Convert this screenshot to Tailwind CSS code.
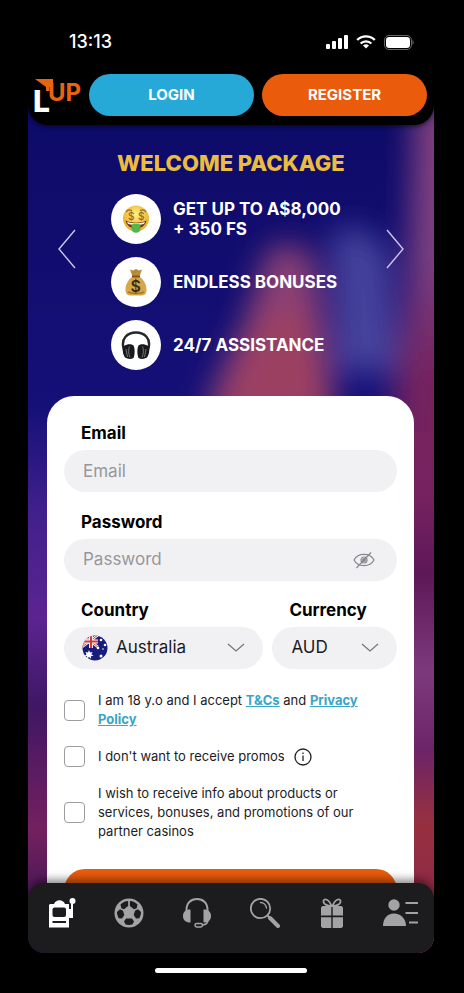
<!DOCTYPE html>
<html lang="en">
<head>
    <meta charset="UTF-8">
    <meta name="viewport" content="width=device-width, initial-scale=1.0">
    <script src="https://cdn.jsdelivr.net/npm/@tailwindcss/browser@4"></script>
    <title>Level Up - Register</title>
</head>
<body class="flex h-screen flex-col overflow-hidden bg-black pl-7 pr-[30px] font-['Inter',sans-serif] text-black">

    <!-- Status bar -->
    <div class="flex h-[72px] shrink-0 items-center justify-between pb-0 pl-[41px] pr-5 pt-3 text-white">
        <span class="text-lg/6 font-medium">13:13</span>
        <div class="flex items-center gap-2">
            <svg class="h-[14px] w-[22px]" viewBox="0 0 22 14" fill="currentColor">
                <rect x="0" y="9" width="4" height="5" rx="1"/>
                <rect x="6" y="6" width="4" height="8" rx="1"/>
                <rect x="12" y="3" width="4" height="11" rx="1"/>
                <rect x="18" y="0" width="4" height="14" rx="1"/>
            </svg>
            <svg class="h-[14px] w-5" viewBox="0 0 20 14" fill="none" stroke="currentColor" stroke-width="2.4">
                <path d="M1.2 5a12.6 12.6 0 0 1 17.6 0"/>
                <path d="M4.6 8.5a7.8 7.8 0 0 1 10.8 0"/>
                <path d="M10 13.6 7 10.6a4.3 4.3 0 0 1 6 0z" fill="currentColor" stroke="none"/>
            </svg>
            <svg class="h-[15px] w-[30px]" viewBox="0 0 30 15">
                <rect x=".5" y=".5" width="27" height="14" rx="4.5" fill="none" stroke="#666"/>
                <rect x="2" y="2" width="24" height="11" rx="3.2" fill="#fff"/>
                <path d="M28.500 5v5c1.6-.8 1.6-4.200 0-5z" fill="#666"/>
            </svg>
        </div>
    </div>

    <div class="relative isolate flex min-h-0 flex-1 flex-col overflow-hidden rounded-b-2xl bg-[#100c72]">

        <!-- Blurred backdrop -->
        <svg class="absolute inset-0 -z-10 h-full w-full" viewBox="0 0 406 881" preserveAspectRatio="none" aria-hidden="true">
            <defs>
                <filter id="soft" x="-50%" y="-50%" width="200%" height="200%"><feGaussianBlur stdDeviation="15"/></filter>
                <linearGradient id="left" x1="0" y1="0" x2="0" y2="1">
                    <stop offset="0" stop-color="#0c0a66"/>
                    <stop offset=".38" stop-color="#151078"/>
                    <stop offset=".5" stop-color="#41208c"/>
                    <stop offset=".62" stop-color="#5b2490"/>
                    <stop offset=".72" stop-color="#3f1764"/>
                    <stop offset=".86" stop-color="#74205f"/>
                    <stop offset="1" stop-color="#281050"/>
                </linearGradient>
                <linearGradient id="right" gradientUnits="userSpaceOnUse" x1="0" y1="0" x2="0" y2="881">
                    <stop offset="0" stop-color="#84427f"/>
                    <stop offset=".22" stop-color="#7c3f80"/>
                    <stop offset=".34" stop-color="#75235f"/>
                    <stop offset=".48" stop-color="#762260"/>
                    <stop offset=".57" stop-color="#5d1858"/>
                    <stop offset=".68" stop-color="#7c3a7c"/>
                    <stop offset=".77" stop-color="#6c2468"/>
                    <stop offset=".85" stop-color="#963040"/>
                    <stop offset="1" stop-color="#8a2548"/>
                </linearGradient>
            </defs>
            <rect width="406" height="881" fill="url(#left)"/>
            <g filter="url(#soft)">
                <path d="M234 190c10-26 44-24 54 4l20 156H176c18-70 44-90 58-160z" fill="#8a4074"/>
                <path d="M232 240h50l24 110H182c16-40 36-60 50-110z" fill="#9c4062"/>
                <path d="M304 160c24-10 48 0 58 30l8 110H308z" fill="#45439c"/>
                <path d="M386 30h70v900h-70l-22-590 16-120z" fill="url(#right)"/>
            </g>
            <path d="M386 360h20v521h-20z" fill="url(#right)"/>
        </svg>

        <!-- Header -->
        <header class="flex shrink-0 items-center gap-2 rounded-b-[20px] bg-black pb-[9px] pl-1.5 pr-[7px] pt-0.5 shadow-[0_2px_4px_rgba(0,0,0,0.5)]">
            <a href="#" aria-label="Up home" class="shrink-0">
                <svg class="h-[38px] w-[47px] overflow-visible" viewBox="0 0 47 38">
                    <text x="-1" y="36" font-size="30" font-weight="800" fill="#fff">L</text>
                    <text x="14" y="25" font-size="24" font-weight="700" fill="#ea640f">UP</text>
                    <path d="M1 3h18v8h-3.500V15H12v-4z" fill="#ea640f"/>
                </svg>
            </a>
            <button type="button" class="h-[42px] flex-1 rounded-full bg-[#27a9d8] text-[15px] font-bold text-white">LOGIN</button>
            <button type="button" class="h-[42px] flex-1 rounded-full bg-[#ea5c0c] text-[15px] font-bold text-white">REGISTER</button>
        </header>

        <main class="min-h-0 flex-1 overflow-hidden">
            <!-- Welcome slider -->
            <section class="flex h-[271px] items-center justify-between px-[30px]">
                <button type="button" aria-label="Previous" class="mb-6 text-[#c9c5ec]">
                    <svg class="h-10 w-[18px]" viewBox="0 0 18 40" fill="none" stroke="currentColor" stroke-width="1.4"><path d="M17 1 1 20l16 19"/></svg>
                </button>
                <div class="flex h-full w-60 flex-col pt-6">
                    <h1 class="pl-1.5 text-[22px]/7 font-extrabold whitespace-nowrap text-[#ebbd3e]">WELCOME PACKAGE</h1>
                    <ul class="mt-[17px] flex flex-col gap-[13px] text-[17px]/5 font-bold whitespace-nowrap text-white">
                        <li class="flex items-center gap-3">
                            <span class="flex size-[50px] items-center justify-center rounded-full bg-white">
                                <svg class="size-7" viewBox="0 0 28 28">
                                    <defs><radialGradient id="face" cy=".35"><stop offset="0" stop-color="#fff083"/><stop offset="1" stop-color="#edb536"/></radialGradient></defs>
                                    <circle cx="14" cy="13.500" r="13" fill="url(#face)"/>
                                    <path d="M4 7c1.500-2 4-2.500 6-1.500M18 5.500c2-1 4.500-.5 6 1.500" fill="none" stroke="#9b6a1d" stroke-width="1.200"/>
                                    <path d="M3.500 15.500c6 3 15 3 21 0-1 4-4 8-10.500 8s-9.500-4-10.500-8z" fill="#6b2c19"/>
                                    <path d="M5 16.800c5 2 13 2 18 0l-1 2.300c-5 1.400-11 1.400-16 0z" fill="#fff"/>
                                    <path d="M9.500 19.500c3-1 6-1 9 0V24c0 5-9 5-9 0z" fill="#54b548"/>
                                    <text x="6" y="15" font-size="10" font-weight="500" fill="#8a681f">$</text>
                                    <text x="16" y="15" font-size="10" font-weight="500" fill="#8a681f">$</text>
                                </svg>
                            </span>
                            <span>GET UP TO A$8,000<br>+ 350 FS</span>
                        </li>
                        <li class="flex items-center gap-3">
                            <span class="flex size-[50px] items-center justify-center rounded-full bg-white">
                                <svg class="h-7 w-6" viewBox="0 0 24 28">
                                    <path d="M6 1.500l3 1 3-1.500 3 1.500 3-1-2.500 7h-7z" fill="#b98b36"/>
                                    <path d="M8 9h8c4 3 7 8 6.500 14-.2 3-2.500 4.500-5 4.500h-11C4 27.500 1.700 26 1.500 23 1 17 4 12 8 9z" fill="#d6a84b"/>
                                    <path d="M4 24c4 2 12 2 16 0" fill="none" stroke="#a97929" stroke-width="1.500"/>
                                    <path d="M8 8.500h8" stroke="#7a5319" stroke-width="1.800"/>
                                    <text x="6.500" y="24" font-size="16" font-weight="600" fill="#3f2b0d">$</text>
                                </svg>
                            </span>
                            <span>ENDLESS BONUSES</span>
                        </li>
                        <li class="flex items-center gap-3">
                            <span class="flex size-[50px] items-center justify-center rounded-full bg-white">
                                <svg class="h-7 w-[30px]" viewBox="0 0 30 28">
                                    <path d="M3 19C-1 7 7 1.500 15 1.500S31 7 27 19" fill="none" stroke="#24262b" stroke-width="2.400"/>
                                    <g fill="#17191d">
                                        <path d="M3 15c3-2 7-2.500 9.500-.5 1.500 3 1.500 9 0 12.500-3 1.500-6 1-8.500-.5C1.500 23 1 18 3 15z"/>
                                        <path d="M27 15c-3-2-7-2.500-9.500-.5-1.500 3-1.500 9 0 12.500 3 1.500 6 1 8.500-.5 2.500-3.500 3-8.500 1-11.500z"/>
                                    </g>
                                    <path d="M5 18l1.500 8M25 18l-1.500 8M8.500 15.500c-1.500 3-1 8 .5 11M21.500 15.500c1.500 3 1 8-.5 11" fill="none" stroke="#85888d" stroke-width=".8"/>
                                </svg>
                            </span>
                            <span>24/7 ASSISTANCE</span>
                        </li>
                    </ul>
                </div>
                <button type="button" aria-label="Next" class="mb-6 text-[#c9c5ec]">
                    <svg class="h-10 w-[18px]" viewBox="0 0 18 40" fill="none" stroke="currentColor" stroke-width="1.4"><path d="m1 1 16 19L1 39"/></svg>
                </button>
            </section>

            <!-- Register form -->
            <form class="ml-[19px] mr-5 rounded-[27px] bg-white px-[17px] pb-20 pt-[25px]">
                <div class="mb-[18px]">
                    <label for="email" class="mb-[5px] block pl-[17px] text-[17px]/6 font-bold">Email</label>
                    <input type="email" id="email" placeholder="Email" class="h-[42px] w-full rounded-full bg-[#f1f1f4] px-[19px] text-[17px] placeholder:text-[#97979b]">
                </div>
                <div class="mb-[17px]">
                    <label for="password" class="mb-[5px] block pl-[17px] text-[17px]/6 font-bold">Password</label>
                    <div class="flex h-[42px] items-center rounded-full bg-[#f1f1f4] pl-[19px] pr-[22px]">
                        <input type="password" id="password" placeholder="Password" class="min-w-0 flex-1 text-[17px] placeholder:text-[#97979b]">
                        <button type="button" aria-label="Show password" class="text-[#88888c]">
                            <svg class="h-[18px] w-[22px]" viewBox="0 0 22 18" fill="none" stroke="currentColor" stroke-width="1.200">
                                <path d="M1 9c4-7.500 16-7.500 20 0-4 7.500-16 7.500-20 0z"/>
                                <circle cx="11" cy="9" r="3"/>
                                <circle cx="11" cy="9" r="1.300" fill="currentColor"/>
                                <path d="M3.500 17 18 1.500"/>
                            </svg>
                        </button>
                    </div>
                </div>
                <div class="mb-[22px] flex gap-[9px]">
                    <div class="min-w-0 flex-[8]">
                        <label for="country" class="mb-[5px] block pl-[17px] text-[17px]/6 font-bold">Country</label>
                        <div class="relative">
                            <select id="country" class="h-[42px] w-full appearance-none rounded-full bg-[#f1f1f4] pl-[52px] pr-10 text-[17px] text-[#1c1c1e]">
                                <option>Australia</option>
                            </select>
                            <svg class="pointer-events-none absolute left-[18px] top-2 size-[26px]" viewBox="0 0 26 26">
                                <defs><clipPath id="round"><circle cx="13" cy="13" r="12.500"/></clipPath></defs>
                                <g clip-path="url(#round)">
                                    <rect width="26" height="26" fill="#171d7c"/>
                                    <path d="M0 0l16 12M16 0 0 12" stroke="#fff" stroke-width="2.600"/>
                                    <path d="M0 0l16 12M16 0 0 12" stroke="#d33a3a" stroke-width="1"/>
                                    <path d="M9 0v13M0 6.500h16" stroke="#fff" stroke-width="4"/>
                                    <path d="M9 0v13M0 6.500h16" stroke="#d33a3a" stroke-width="2.200"/>
                                    <g fill="#fff">
                                        <path d="m7 15 1 2.500 2.600-.6-1.200 2.300 2.200 1.500-2.700.5.200 2.600L7 22l-2.100 1.800.2-2.600-2.700-.5 2.200-1.500-1.200-2.300 2.600.6z"/>
                                        <circle cx="19" cy="5" r="1.300"/><circle cx="23" cy="10" r="1.300"/>
                                        <circle cx="16" cy="13" r="1.300"/><circle cx="19" cy="21" r="1.500"/><circle cx="21" cy="14" r=".8"/>
                                    </g>
                                </g>
                            </svg>
                            <svg class="pointer-events-none absolute right-[18px] top-4 h-[10px] w-[18px]" viewBox="0 0 18 10" fill="none" stroke="#77777b" stroke-width="1.300"><path d="m1 1 8 7 8-7"/></svg>
                        </div>
                    </div>
                    <div class="min-w-0 flex-[5]">
                        <label for="currency" class="mb-[5px] block pl-[17px] text-[17px]/6 font-bold">Currency</label>
                        <div class="relative">
                            <select id="currency" class="h-[42px] w-full appearance-none rounded-full bg-[#f1f1f4] pl-[19px] pr-10 text-[17px] text-[#1c1c1e]">
                                <option>AUD</option>
                            </select>
                            <svg class="pointer-events-none absolute right-[18px] top-4 h-[10px] w-[18px]" viewBox="0 0 18 10" fill="none" stroke="#77777b" stroke-width="1.300"><path d="m1 1 8 7 8-7"/></svg>
                        </div>
                    </div>
                </div>

                <div class="flex flex-col gap-[18px] text-[13px]/[19px] text-[#1c1c1e]">
                    <div class="flex items-center gap-[13px]">
                        <input type="checkbox" id="terms" class="size-[21px] shrink-0 appearance-none rounded border border-[#9d9da3] bg-white checked:bg-[#27a9d8]">
                        <label for="terms">I am 18 y.o and I accept <a href="#" class="font-bold text-[#3aa5c6] underline">T&amp;Cs</a> and <a href="#" class="font-bold text-[#3aa5c6] underline">Privacy<br>Policy</a></label>
                    </div>
                    <div class="flex h-[19px] items-center gap-[13px]">
                        <input type="checkbox" id="promos" class="size-[21px] shrink-0 appearance-none rounded border border-[#9d9da3] bg-white checked:bg-[#27a9d8]">
                        <label for="promos">I don't want to receive promos</label>
                        <button type="button" aria-label="More info" class="-ml-1">
                            <svg class="size-[18px]" viewBox="0 0 18 18" fill="none" stroke="#222" stroke-width="1.300">
                                <circle cx="9" cy="9" r="8"/>
                                <path d="M9 7.500v5.500M9 4.500v1.500"/>
                            </svg>
                        </button>
                    </div>
                    <div class="flex items-center gap-[13px]">
                        <input type="checkbox" id="partners" class="size-[21px] shrink-0 appearance-none rounded border border-[#9d9da3] bg-white checked:bg-[#27a9d8]">
                        <label for="partners">I wish to receive info about products or<br>services, bonuses, and promotions of our<br>partner casinos</label>
                    </div>
                </div>

                <button type="submit" aria-label="Create account" class="mt-7 h-[42px] w-full rounded-full bg-[#ea5c0c]"></button>
            </form>
        </main>

        <!-- Bottom navigation, floats over the form -->
        <nav class="absolute inset-x-0 bottom-0 grid h-[70px] grid-cols-6 justify-items-center rounded-2xl bg-[#1c1c1e] pt-[15px] text-[#a3a3a6] shadow-[0_-3px_10px_rgba(0,0,0,0.5)]">
            <a href="#" aria-label="Slots" class="h-[30px] text-white">
                <svg class="size-[30px]" viewBox="0 0 30 30">
                    <path d="M3 6h4c2-5 9-5 11 0h4v5h2V5.500h2V20h-4v9.500H2V7z" fill="currentColor"/>
                    <circle cx="25.500" cy="3" r="3" fill="currentColor"/>
                    <rect x="5.500" y="9.500" width="13.500" height="9.500" rx="2" fill="#1c1c1e"/>
                    <path d="M5.500 24H19" stroke="#1c1c1e" stroke-width="1.800"/>
                </svg>
            </a>
            <a href="#" aria-label="Sport" class="h-[30px]">
                <svg class="size-[30px]" viewBox="0 0 30 30">
                    <circle cx="15" cy="15" r="14.500" fill="currentColor"/>
                    <g fill="#1c1c1e">
                        <path d="M15.900 3c3 .2 5.800 1.500 7.600 3.500l-.8 3.700-2.700 1-4.100-3.200z"/>
                        <path d="M14.100 3c-3 .2-5.800 1.500-7.600 3.500l.8 3.700 2.700 1L14.100 8z"/>
                        <path d="M3 14l3-2.800 3 1.500 1.300 4.300L8 20.500l-3.300-.3C3.500 18 3 16 3 14z"/>
                        <path d="M27 14l-3-2.800-3 1.500-1.300 4.300 2.300 3.500 3.300-.3C26.500 18 27 16 27 14z"/>
                        <path d="M12 20.500h6l2 3-1.600 3c-2.200.6-4.600.6-6.800 0L10 23.500z"/>
                    </g>
                </svg>
            </a>
            <a href="#" aria-label="Support" class="h-[30px]">
                <svg class="size-[30px]" viewBox="0 0 30 30" fill="none" stroke="currentColor">
                    <path d="M4.500 13C4 5 9 1 15 1s11 4 10.500 12" stroke-width="2"/>
                    <path d="M8.500 11.500v13C3.500 24.500 1 22 1 18s2.500-6.500 7.500-6.500zM21.500 11.500v13c5 0 7.500-2.500 7.500-6.500s-2.500-6.500-7.500-6.500z" fill="currentColor" stroke="none"/>
                    <path d="M26 23c-1 3-3 4-6 4" stroke-width="1.500"/>
                    <rect x="13" y="25.500" width="7.500" height="3.500" rx="1.700" stroke-width="1.500"/>
                </svg>
            </a>
            <a href="#" aria-label="Search" class="h-[30px]">
                <svg class="size-[30px]" viewBox="0 0 30 30" fill="none" stroke="currentColor" stroke-linecap="round">
                    <circle cx="10.500" cy="10.500" r="9.700" stroke-width="1.800"/>
                    <path d="M10.500 4.500c3 0 5.500 2.500 6 5.500" stroke-width="1.400"/>
                    <path d="m17.500 17.500 2 2" stroke-width="2"/>
                    <path d="m20 20 8 8" stroke-width="4"/>
                </svg>
            </a>
            <a href="#" aria-label="Gifts" class="h-[30px]">
                <svg class="size-[30px]" viewBox="0 0 30 30">
                    <path d="M14.500 8C10 8 6 6 6.500 3s5.500-2 8 5zM15.500 8c4.500 0 8.500-2 8-5s-5.500-2-8 5z" fill="none" stroke="currentColor" stroke-width="1.800"/>
                    <path d="M5.500 8h8.800v9.500H4V9.500zM15.700 8h8.800L26 9.500v8H15.700zM4 19.200h10.300V30H5.500L4 28.500zM15.700 19.200H26v9.300L24.500 30h-8.800z" fill="currentColor"/>
                </svg>
            </a>
            <a href="#" aria-label="Account" class="h-[30px]">
                <svg class="h-[30px] w-9" viewBox="0 0 36 30" fill="currentColor">
                    <circle cx="12" cy="7" r="5.700"/>
                    <path d="M1 28c0-7 4-12.500 11-12.500S24 21 24 28z"/>
                    <path d="M23.500 5H36M23.500 15H36M27 24.500h9" stroke="currentColor" stroke-width="1.800"/>
                </svg>
            </a>
        </nav>
    </div>

    <!-- Home indicator -->
    <div class="flex h-10 shrink-0 justify-center pt-[15px]">
        <div class="h-[5px] w-[152px] rounded-full bg-white"></div>
    </div>
</body>
</html>
